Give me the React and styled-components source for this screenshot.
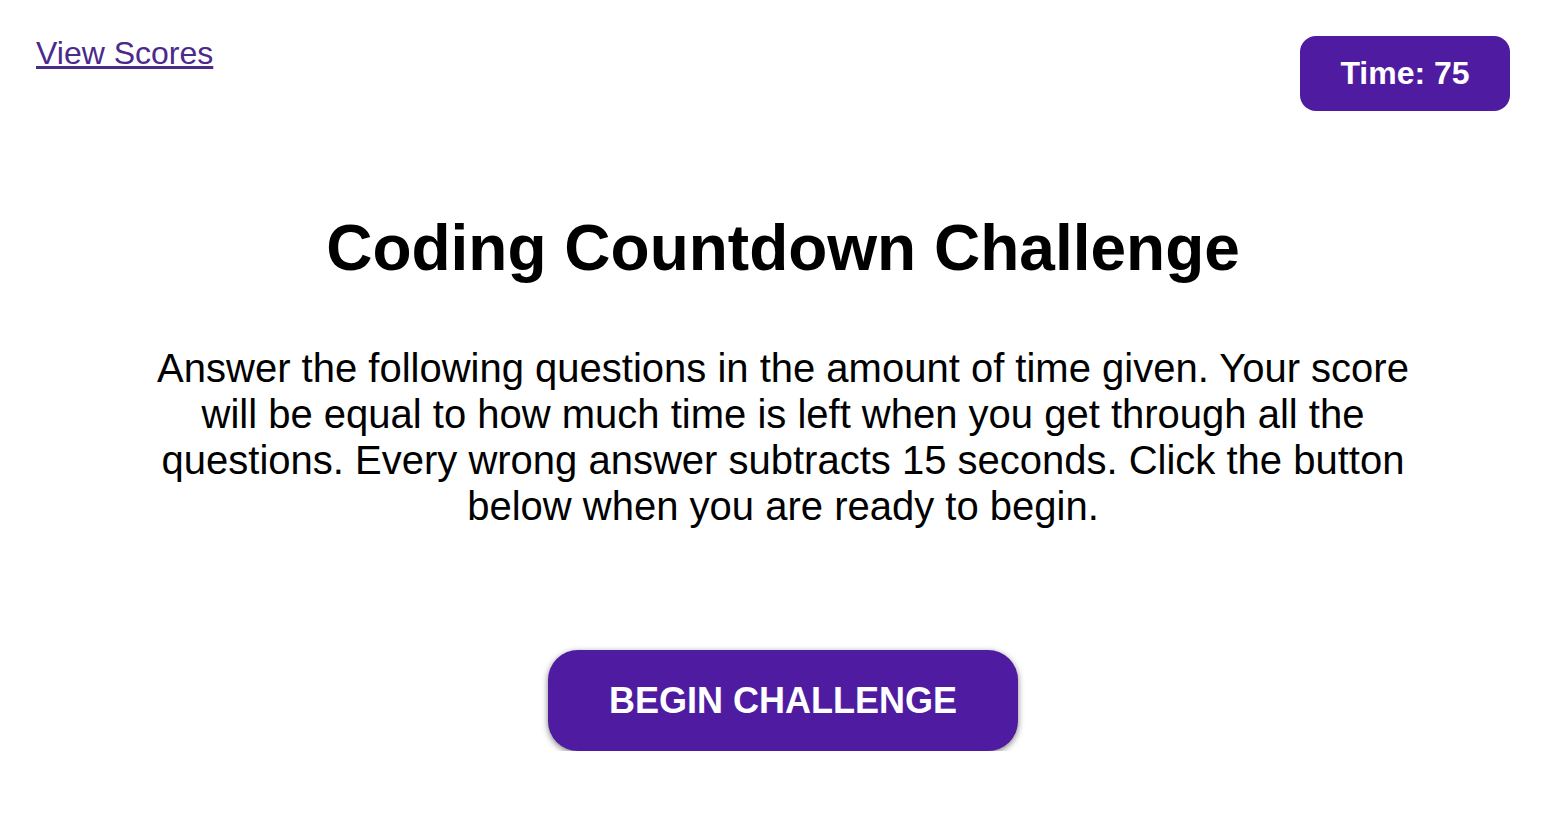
import React from "react";
import styled, { createGlobalStyle } from "styled-components";

const GlobalStyle = createGlobalStyle`
  * {
    box-sizing: border-box;
  }

  body {
    margin: 0;
    background: #ffffff;
    color: #000000;
    font-family: "Liberation Sans", Arial, sans-serif;
  }
`;

const App = () => {
  return (
    <>
      <GlobalStyle />
      <Header>
        <ScoresLink href="#">View Scores</ScoresLink>
        <Timer>Time: 75</Timer>
      </Header>
      <Main>
        <Title>Coding Countdown Challenge</Title>
        <Intro>
          Answer the following questions in the amount of time given. Your
          score will be equal to how much time is left when you get through all
          the questions. Every wrong answer subtracts 15 seconds. Click the
          button below when you are ready to begin.
        </Intro>
        <StartButton>BEGIN CHALLENGE</StartButton>
      </Main>
    </>
  );
};

export default App;

const Header = styled.header`
  display: flex;
  justify-content: space-between;
  align-items: flex-start;
  padding: 36px 50px 0 36px;
`;

const ScoresLink = styled.a`
  font-size: 32px;
  line-height: 1;
  margin-top: 1px;
  color: #4b2a8c;
  text-decoration: underline;
`;

const Timer = styled.div`
  width: 210px;
  height: 75px;
  display: flex;
  align-items: center;
  justify-content: center;
  background: #4f1ba0;
  color: #ffffff;
  font-size: 32px;
  font-weight: bold;
  border-radius: 16px;
`;

const Main = styled.main`
  display: flex;
  flex-direction: column;
  align-items: center;
  margin-left: 6px;
  padding-top: 100px;
`;

const Title = styled.h1`
  margin: 0;
  font-size: 64px;
  line-height: 74px;
  font-weight: bold;
`;

const Intro = styled.p`
  width: 1290px;
  margin: 60px 0 0;
  font-size: 40px;
  line-height: 46px;
  text-align: center;
`;

const StartButton = styled.button`
  width: 470px;
  height: 101px;
  margin-top: 121px;
  border: none;
  border-radius: 30px;
  background: #4f1ba0;
  color: #ffffff;
  font-family: "Liberation Sans", Arial, sans-serif;
  font-size: 36px;
  font-weight: bold;
  box-shadow: 0 2px 6px rgba(0, 0, 0, 0.5);
  cursor: pointer;
`;
